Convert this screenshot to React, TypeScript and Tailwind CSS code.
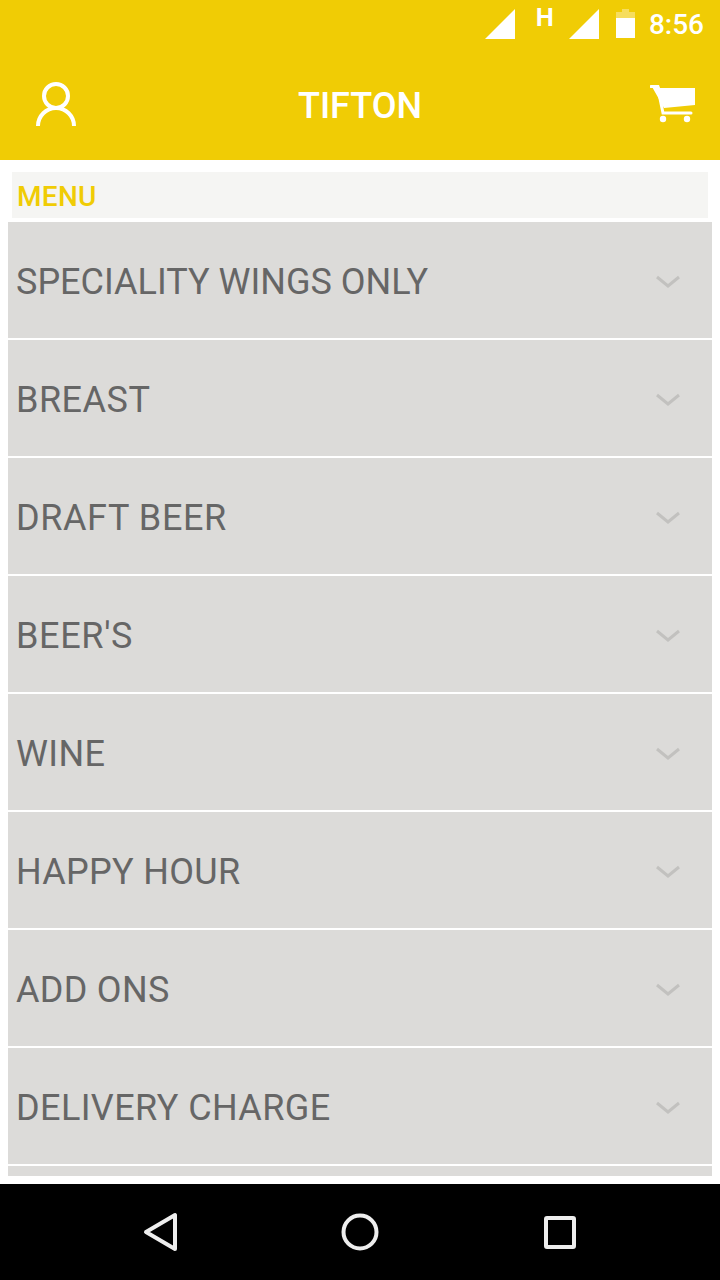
const items = [
  { label: "SPECIALITY WINGS ONLY", spacing: "tracking-[0px]" },
  { label: "BREAST", spacing: "tracking-[0.5px]" },
  { label: "DRAFT BEER", spacing: "tracking-[0.6px]" },
  { label: "BEER'S", spacing: "tracking-[0.65px]" },
  { label: "WINE", spacing: "tracking-[0.35px]" },
  { label: "HAPPY HOUR", spacing: "tracking-[0.3px]" },
  { label: "ADD ONS", spacing: "tracking-[0.3px]" },
  { label: "DELIVERY CHARGE", spacing: "tracking-[0.4px]" },
];

const Signal = () => (
  <svg width="30" height="30" viewBox="0 0 30 30" className="fill-white">
    <polygon points="30,0 30,30 0,30" />
  </svg>
);

const App = () => {
  return (
    <div className="w-[720px] h-[1280px] bg-white flex flex-col overflow-hidden font-['Roboto',sans-serif]">
      <header className="bg-[#f0cc05] h-[160px] shrink-0 flex flex-col">
        <div className="h-[48px] flex items-start justify-end pr-[16px] pt-[9px]">
          <Signal />
          <span className="w-[54px] pl-[6px] text-center text-[25px] leading-[18px] font-bold text-white font-['Liberation_Sans',sans-serif] -mt-[1px]">
            H
          </span>
          <Signal />
          <svg width="19" height="29" viewBox="0 0 19 29" className="ml-[17px]">
            <path d="M6 0h7v3h6v6H0V3h6z" fill="#f6dd5e" />
            <rect x="0" y="9" width="19" height="20" fill="#fff" />
          </svg>
          <span className="ml-[14px] text-[28px] leading-[32px] text-white font-medium">8:56</span>
        </div>
        <div className="flex-1 flex items-center justify-between pl-[36px] pr-[25px]">
          <svg width="40" height="44" viewBox="0 0 40 44" fill="none" stroke="#fff" strokeWidth="4">
            <circle cx="20" cy="14" r="12" />
            <path d="M2 44a18 18 0 0 1 36 0" />
          </svg>
          <span className="text-[36px] leading-[44px] font-medium text-white pt-[4px] mr-[6px]">TIFTON</span>
          <svg width="45" height="38" viewBox="0 0 45 38" fill="#fff">
            <path d="M1 0h8l1 3h35v17l-31 3z" />
            <path d="M1 1.5h6.5L13 28h28" fill="none" stroke="#fff" strokeWidth="3" strokeLinecap="round" />
            <circle cx="13" cy="34" r="3.2" />
            <circle cx="37" cy="34" r="3.2" />
          </svg>
        </div>
      </header>

      <main className="flex-1 min-h-0 pt-[12px] pb-[8px]">
        <div className="mx-[12px] h-[46px] bg-[#f5f5f3] flex items-center px-[5px] pt-[4px]">
          <span className="text-[28px] leading-[32px] font-medium tracking-[0.3px] text-[#f0cc05]">MENU</span>
        </div>
        <div className="mx-[8px] mt-[4px] h-[954px] overflow-hidden flex flex-col gap-[2px]">
          {items.map((item) => (
            <div key={item.label} className="h-[116px] shrink-0 bg-[#dcdbd9] flex items-center justify-between pl-[8px] pr-[32px] pt-[4px]">
              <span className={`text-[36px] leading-[44px] text-[#666666] ${item.spacing}`}>{item.label}</span>
              <svg width="24" height="16" viewBox="0 0 24 16" fill="none" stroke="#c2c1bf" strokeWidth="3">
                <path d="M1 3l11 9 11-9" />
              </svg>
            </div>
          ))}
          <div className="h-[116px] shrink-0 bg-[#dcdbd9]" />
        </div>
      </main>

      <nav className="bg-black h-[96px] shrink-0 flex items-center justify-between pl-[143px] pr-[144px]">
        <svg width="36" height="40" viewBox="0 0 36 40" fill="none" stroke="#eeeeee" strokeWidth="4" strokeLinejoin="round">
          <path d="M32 3v34L3 20z" />
        </svg>
        <svg width="38" height="38" viewBox="0 0 38 38" fill="none" stroke="#eeeeee" strokeWidth="4" className="mr-[3px]">
          <circle cx="19" cy="19" r="16.5" />
        </svg>
        <svg width="32" height="33" viewBox="0 0 32 33" fill="none" stroke="#eeeeee" strokeWidth="4" strokeLinejoin="round">
          <rect x="2" y="2" width="28" height="29" rx="1" />
        </svg>
      </nav>
    </div>
  );
};

export default App;
